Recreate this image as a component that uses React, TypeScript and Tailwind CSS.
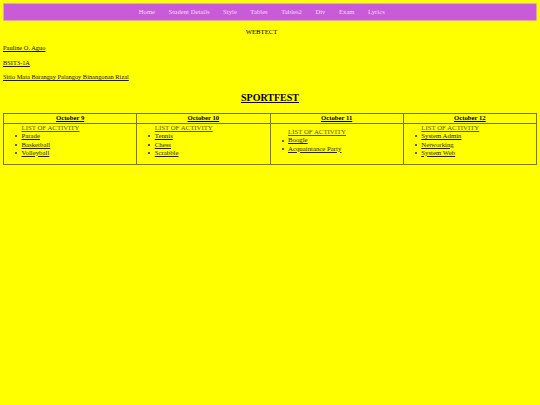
import React from "react";

const navItems = ["Home", "Student Details", "Style", "Tables", "Tables2", "Div", "Exam", "Lyrics"];

const days = [
  { date: "October 9", items: ["Parade", "Basketball", "Volleyball"] },
  { date: "October 10", items: ["Tennis", "Chess", "Scrabble"] },
  { date: "October 11", items: ["Boogle", "Acquaintance Party"] },
  { date: "October 12", items: ["System Admin", "Networking", "System Web"] },
];

export default function App() {
  return (
    <div className="min-h-[405px] bg-[#ffff00] p-[3px] font-['Liberation_Serif',serif] text-[6.7px] leading-[7.7px] text-black">
      <nav className="flex h-[18px] items-center justify-center gap-[13.5px] border border-[#e2a4c4] bg-[#c95bd8] pr-[16.5px] text-[#f7d9f7]">
        {navItems.map((n) => (
          <span key={n}>{n}</span>
        ))}
      </nav>

      <p className="mt-[7px] pr-[17px] text-center">WEBTECT</p>

      <div className="mt-[8.3px] flex flex-col gap-[7px] text-[6.4px] text-[#141400]">
        <p className="underline">Pauline O. Aguo</p>
        <p className="underline">BSIT3-1A</p>
        <p className="underline">Sitio Mata Barangay Palangoy Binangonan Rizal</p>
      </div>

      <h2 className="mt-[10.7px] text-center text-[10px] font-bold leading-[11.5px] underline">SPORTFEST</h2>

      <table className="mt-[9.5px] w-full table-fixed border-collapse border border-[#74741a]">
        <thead>
          <tr>
            {days.map((d) => (
              <th
                key={d.date}
                className="h-[10px] border border-[#74741a] p-0 text-center text-[6.7px] font-bold leading-[8px] underline"
              >
                {d.date}
              </th>
            ))}
          </tr>
        </thead>
        <tbody>
          <tr>
            {days.map((d) => (
              <td key={d.date} className="h-[41px] border border-[#74741a] p-0 align-middle text-[6.8px] leading-[8.3px]">
                <div className="mb-[6.5px]">
                  <div className="pl-[17.5px] text-[#5e5e00] underline">LIST OF ACTIVITY</div>
                  <ul className="list-none pl-[11px]">
                    {d.items.map((it) => (
                      <li key={it} className="flex items-center gap-[4.5px] text-[#1f1f00]">
                        <span className="h-[2px] w-[2px] shrink-0 rounded-full bg-[#2a2a00]" />
                        <span className="underline">{it}</span>
                      </li>
                    ))}
                  </ul>
                </div>
              </td>
            ))}
          </tr>
        </tbody>
      </table>
    </div>
  );
}
